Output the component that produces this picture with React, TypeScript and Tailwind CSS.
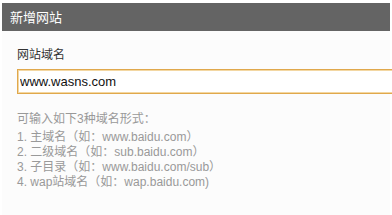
import React, { useState } from 'react';

const cjk = '"Liberation Sans", "Noto Sans CJK SC", sans-serif';

export default function App() {
  const [domain, setDomain] = useState('www.wasns.com');

  const forms = [
    '1. 主域名（如：www.baidu.com）',
    '2. 二级域名（如：sub.baidu.com）',
    '3. 子目录（如：www.baidu.com/sub）',
    '4. wap站域名（如：wap.baidu.com)',
  ];

  return (
    <div className="w-full h-[215px] bg-white px-[2px] pt-[3px] overflow-hidden" style={{ fontFamily: cjk }}>
      <div className="h-[28px] bg-[#646464] flex items-center pl-[8px]">
        <h1 className="text-white text-[13px] leading-none">新增网站</h1>
      </div>

      <div className="h-[184px] bg-[#fcfcfc] pl-[15px] pt-[16px]">
        <label className="block text-[12px] leading-[16px] text-[#333] mb-[6px]">网站域名</label>
        <input
          type="text"
          value={domain}
          onChange={(e) => setDomain(e.target.value)}
          className="block w-[400px] h-[25px] bg-white border border-[#e0a84c] shadow-[inset_0_0_0_1px_#f3d7a2] px-[2px] text-[13px] text-[#111] outline-none"
          style={{ fontFamily: '"Liberation Sans", Arial, sans-serif' }}
        />

        <div className="mt-[18px] text-[12px] leading-[15px] text-[#999]">
          <p className="mb-[3px]">可输入如下3种域名形式：</p>
          {forms.map((f) => (
            <p key={f}>{f}</p>
          ))}
        </div>
      </div>
    </div>
  );
}
